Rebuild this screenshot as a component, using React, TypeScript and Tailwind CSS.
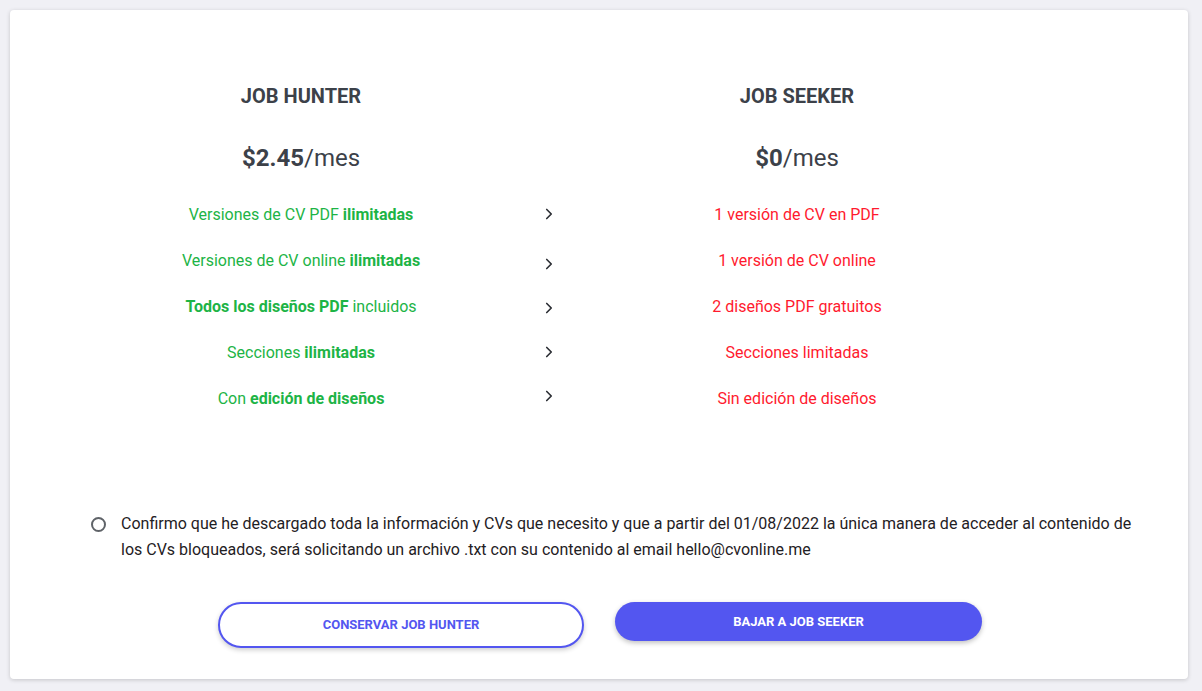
import { ChevronRight } from "lucide-react";

const hunter = [
    <>Versiones de CV PDF <b>ilimitadas</b></>,
    <>Versiones de CV online <b>ilimitadas</b></>,
    <><b>Todos los diseños PDF</b> incluidos</>,
    <>Secciones <b>ilimitadas</b></>,
    <>Con <b>edición de diseños</b></>,
];

const seeker = [
    "1 versión de CV en PDF",
    "1 versión de CV online",
    "2 diseños PDF gratuitos",
    "Secciones limitadas",
    "Sin edición de diseños",
];

const chevronOffsets = ["mt-0", "mt-[32px]", "mt-[26px]", "mt-[26px]", "mt-[26px]"];

export default function App() {
    return (
        <div className="min-h-[691px] bg-[#f0f0f5] p-[10px] pr-[14px] font-['Roboto',sans-serif]">
            <div className="bg-white rounded-[4px] shadow-[0_1px_4px_rgba(0,0,0,0.18)] h-[669px] pt-[74px]">
                <div className="grid grid-cols-[248px_248px_248px] ml-[167px]">
                    <div className="flex flex-col items-center">
                        <h2 className="text-[20px] leading-[24px] font-bold text-[#3c4149]">JOB HUNTER</h2>
                        <p className="mt-[36px] text-[24px] leading-[28px] text-[#3c4149]"><b>$2.45</b>/mes</p>
                        <ul className="mt-[32px] flex flex-col gap-[24px] text-center text-[16px] leading-[22px] text-[#1db446] [&_b]:font-bold">
                            {hunter.map((h, i) => <li key={i} className="whitespace-nowrap">{h}</li>)}
                        </ul>
                    </div>
                    <div className="flex flex-col items-center pt-[121px]">
                        {chevronOffsets.map((m, i) => (
                            <ChevronRight key={i} className={`${m} w-[18px] h-[18px] text-[#2a2d33]`} strokeWidth={2.2} />
                        ))}
                    </div>
                    <div className="flex flex-col items-center">
                        <h2 className="text-[20px] leading-[24px] font-bold text-[#3c4149]">JOB SEEKER</h2>
                        <p className="mt-[36px] text-[24px] leading-[28px] text-[#3c4149]"><b>$0</b>/mes</p>
                        <ul className="mt-[32px] flex flex-col gap-[24px] text-center text-[16px] leading-[22px] text-[#ff1a2e]">
                            {seeker.map((s, i) => <li key={i} className="whitespace-nowrap">{s}</li>)}
                        </ul>
                    </div>
                </div>

                <label className="mt-[101px] ml-[81px] mr-[40px] flex items-start gap-[15px]">
                    <span className="mt-[6px] w-[15px] h-[15px] shrink-0 rounded-full border-2 border-[#5f6368]" />
                    <span className="text-[16px] leading-[26px] text-[#1f2124]">
                        Confirmo que he descargado toda la información y CVs que necesito y que a partir del 01/08/2022 la única manera de acceder al contenido de los CVs bloqueados, será solicitando un archivo .txt con su contenido al email hello@cvonline.me
                    </span>
                </label>

                <div className="mt-[39px] ml-[208px] flex items-start gap-[31px]">
                    <button className="w-[366px] h-[46px] rounded-full border-2 border-[#5356f0] bg-white text-[#5356f0] text-[13px] font-bold shadow-[0_2px_5px_rgba(0,0,0,0.2)]">
                        CONSERVAR JOB HUNTER
                    </button>
                    <button className="w-[367px] h-[39px] rounded-full bg-[#5356f0] text-white text-[13px] font-bold shadow-[0_2px_5px_rgba(0,0,0,0.25)]">
                        BAJAR A JOB SEEKER
                    </button>
                </div>
            </div>
        </div>
    );
}
